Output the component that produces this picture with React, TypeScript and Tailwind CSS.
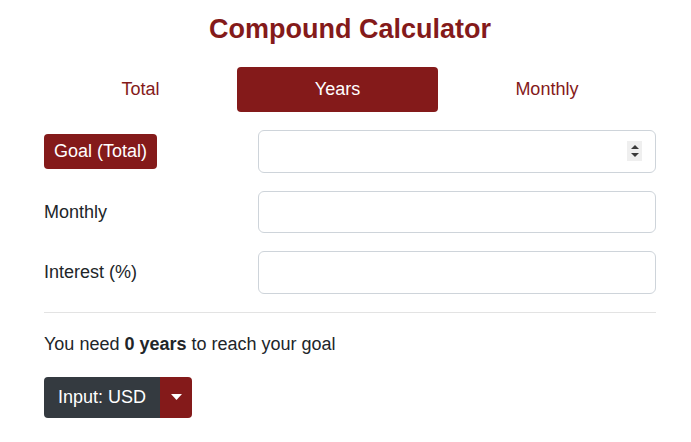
import { useState } from "react";

const tabs = ["Total", "Years", "Monthly"];

const Field = ({ label, active, spinner }: { label: string; active?: boolean; spinner?: boolean }) => (
  <div className="grid grid-cols-[214px_1fr] items-center">
    <div>
      {active ? (
        <span className="inline-block bg-[#841a1a] text-white rounded-[4px] px-[10px] py-[4px] leading-[27px]">
          {label}
        </span>
      ) : (
        <span className="leading-[27px]">{label}</span>
      )}
    </div>
    <div className="relative">
      <input
        type="text"
        className="block w-full h-[42.5px] border border-[#ced4da] rounded-[6px] px-3 outline-none bg-white"
      />
      {spinner && (
        <div className="absolute right-[14px] top-[11px] w-[15px] h-[20px] bg-[#efefef] flex flex-col items-center justify-center gap-[4px]">
          <svg width="8" height="4" viewBox="0 0 8 4">
            <path d="M0 4 L4 0 L8 4 Z" fill="#3a3a3a" />
          </svg>
          <svg width="8" height="4" viewBox="0 0 8 4">
            <path d="M0 0 L8 0 L4 4 Z" fill="#3a3a3a" />
          </svg>
        </div>
      )}
    </div>
  </div>
);

const App = () => {
  const [tab, setTab] = useState("Years");

  return (
    <div className="bg-white min-h-[442px] text-[#212529] text-[18px]" style={{ fontFamily: '"Liberation Sans", Arial, sans-serif' }}>
      <div className="ml-[44px] w-[612px] pt-[13px]">
        <h1 className="text-center text-[27px] leading-[1.2] font-bold text-[#841a1a]">Compound Calculator</h1>

        <div className="flex mt-[22px]">
          {tabs.map((t) => (
            <button
              key={t}
              onClick={() => setTab(t)}
              className={`flex-auto px-4 py-[9px] leading-[27px] rounded-[4px] ${
                tab === t ? "bg-[#841a1a] text-white" : "text-[#841a1a]"
              }`}>
              {t}
            </button>
          ))}
        </div>

        <div className="mt-[18px] flex flex-col gap-[18px]">
          <Field label="Goal (Total)" active spinner />
          <Field label="Monthly" />
          <Field label="Interest (%)" />
        </div>

        <hr className="mt-[18px] border-0 border-t border-[#e3e3e3]" />

        <p className="mt-[18px] leading-[27px]">
          You need <span className="font-bold">0 years</span> to reach your goal
        </p>

        <div className="mt-[19px] inline-flex rounded-[4px] overflow-hidden">
          <button className="bg-[#343a40] text-white px-[14px] py-[7px] leading-[27px]">Input: USD</button>
          <button className="bg-[#841a1a] w-[32px] flex items-center justify-center">
            <svg width="11" height="6" viewBox="0 0 11 6">
              <path d="M0 0 L11 0 L5.5 6 Z" fill="#fff" />
            </svg>
          </button>
        </div>
      </div>
    </div>
  );
};

export default App;
